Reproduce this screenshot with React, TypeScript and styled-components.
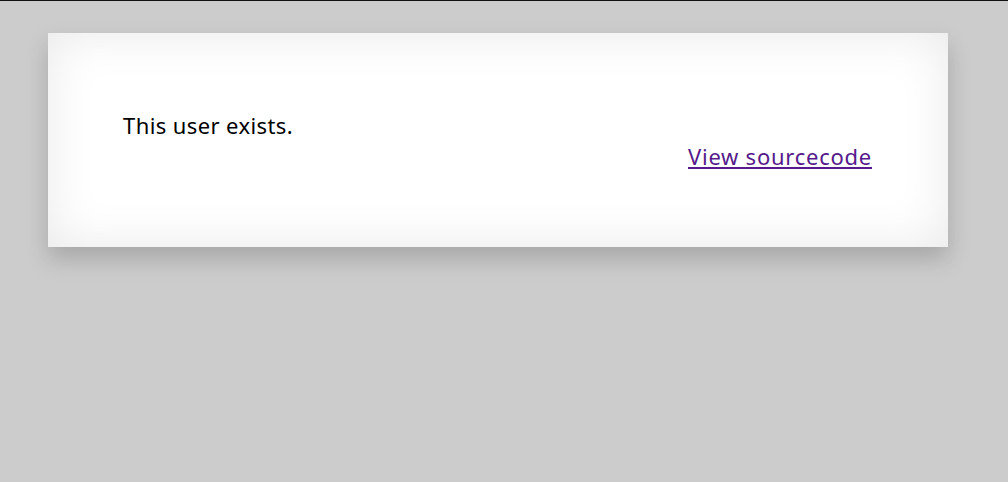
import React from "react";
import styled, { createGlobalStyle } from "styled-components";

const Global = createGlobalStyle`
  html, body {
    margin: 0;
    padding: 0;
    background: #cccccc;
  }
  body {
    border-top: 1px solid #111;
    min-height: 481px;
    font-family: "Noto Sans", "Open Sans", sans-serif;
  }
`;

const Page = styled.div`
  padding: 32px 60px 0 48px;
`;

const Card = styled.div`
  width: 900px;
  box-sizing: border-box;
  padding: 77px 76px 75px 75px;
  background: #ffffff;
  box-shadow: inset 0 0 50px rgba(0, 0, 0, 0.09), 0 12px 22px rgba(0, 0, 0, 0.18);
  font-size: 22px;
  line-height: 31px;
  letter-spacing: 0.4px;
  color: #000;
`;

const Message = styled.p`
  margin: 0;
`;

const Footer = styled.div`
  display: flex;
  justify-content: flex-end;
`;

const SourceLink = styled.a`
  color: #551a8b;
  text-decoration: underline;
  letter-spacing: 0.75px;
`;

export default function App() {
  return (
    <>
      <Global />
      <Page>
        <Card>
          <Message>This user exists.</Message>
          <Footer>
            <SourceLink href="#">View sourcecode</SourceLink>
          </Footer>
        </Card>
      </Page>
    </>
  );
}
